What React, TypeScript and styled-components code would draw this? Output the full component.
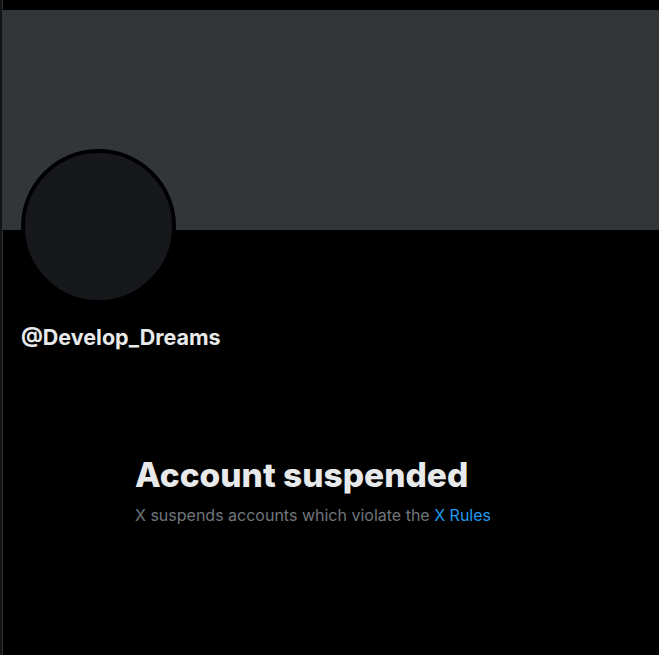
import React from "react";
import styled, { createGlobalStyle } from "styled-components";

const Global = createGlobalStyle`
  html, body { margin: 0; padding: 0; background: #000; }
  body { font-family: Inter, "Noto Sans", sans-serif; }
`;

const Page = styled.div`
  display: flex;
  min-height: 655px;
  background: #000;
`;

const Gutter = styled.div`
  width: 2px;
  background: #141414;
  flex: none;
`;

const Column = styled.main`
  flex: 1;
  border-left: 1px solid #2f3336;
  padding-top: 10px;
  display: flex;
  flex-direction: column;
`;

const Banner = styled.div`
  height: 220px;
  background: #333639;
`;

const ProfileHead = styled.div`
  padding: 0 18px;
  display: flex;
  flex-direction: column;
`;

const Avatar = styled.div`
  width: 147px;
  height: 147px;
  margin-top: -81px;
  border-radius: 50%;
  border: 4px solid #000;
  background: #16181c;
  position: relative;
`;

const Handle = styled.div`
  margin-top: 21px;
  font-size: 21.5px;
  line-height: 24px;
  font-weight: 700;
  color: #e7e9ea;
`;

const Empty = styled.section`
  margin-top: 107px;
  padding-left: 132px;
  display: flex;
  flex-direction: column;
`;

const Title = styled.h2`
  margin: 0;
  font-size: 33.5px;
  line-height: 38px;
  font-weight: 800;
  color: #e7e9ea;
`;

const Sub = styled.p`
  margin: 10px 0 0;
  font-size: 16px;
  line-height: 22px;
  color: #71767b;
`;

const RulesLink = styled.a`
  color: #1d9bf0;
  text-decoration: none;
`;

export default function App() {
  return (
    <>
      <Global />
      <Page>
        <Gutter />
        <Column>
          <Banner />
          <ProfileHead>
            <Avatar />
            <Handle>@Develop_Dreams</Handle>
          </ProfileHead>
          <Empty>
            <Title>Account suspended</Title>
            <Sub>
              X suspends accounts which violate the <RulesLink href="#">X Rules</RulesLink>
            </Sub>
          </Empty>
        </Column>
      </Page>
    </>
  );
}
